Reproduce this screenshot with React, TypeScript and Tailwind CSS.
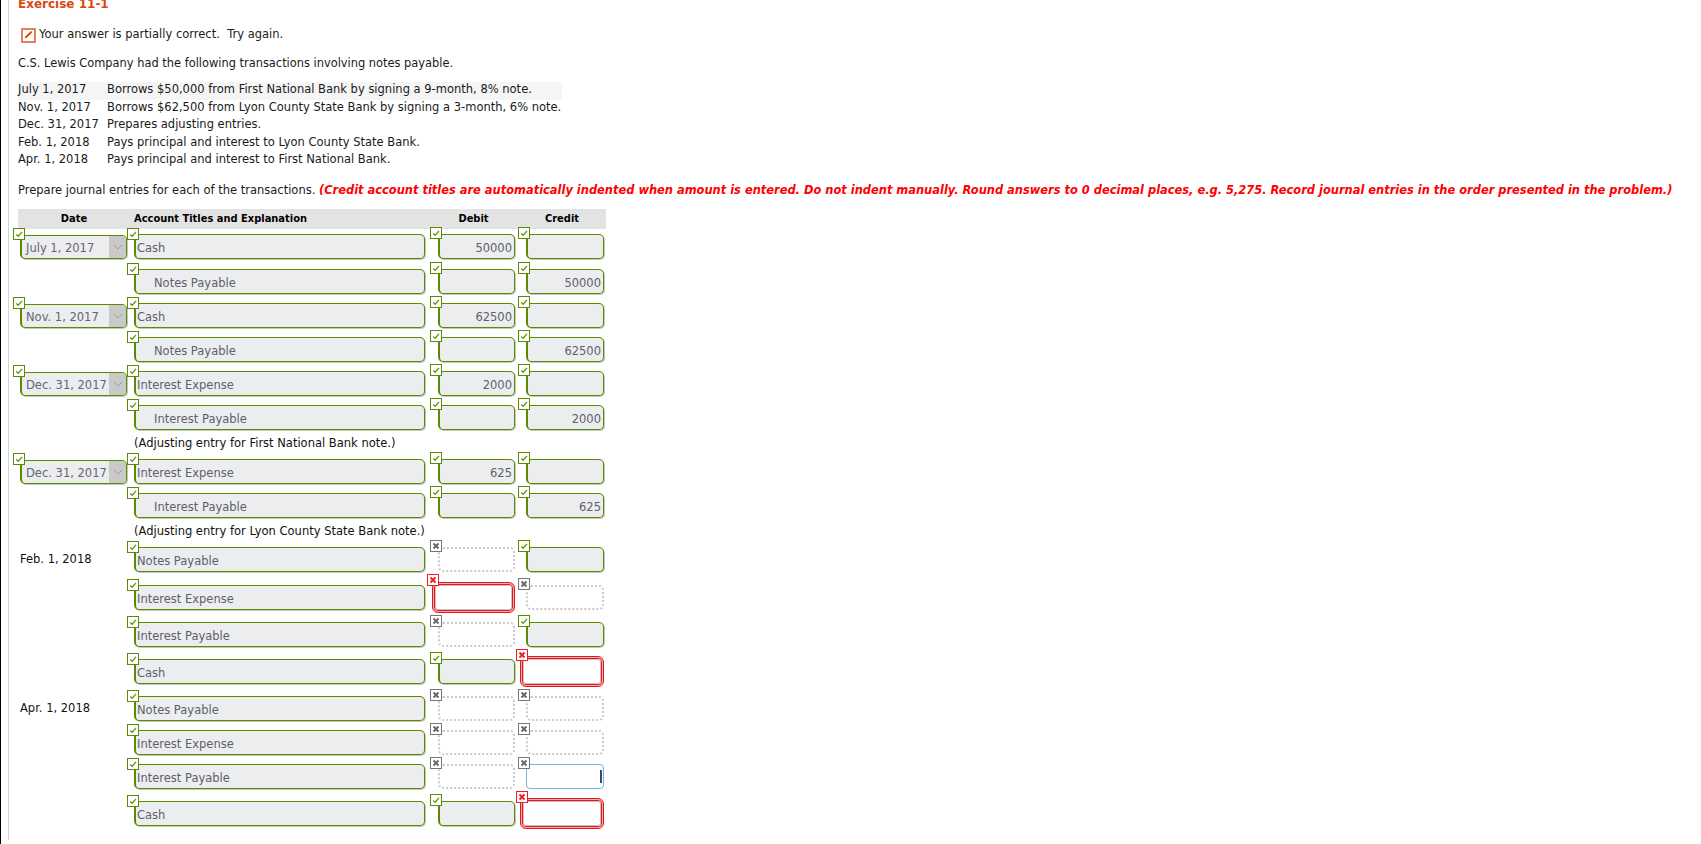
import React from "react";

type Mark = "ok" | "no" | "bad";
type Kind = "ok" | "empty" | "focus" | "bad";

const Badge = ({ mark, className }: { mark: Mark; className: string }) => {
  const color = mark === "ok" ? "border-[#5b8c00]" : mark === "no" ? "border-[#777777]" : "border-[#ee1c25]";
  return (
    <span className={`absolute z-10 flex h-3 w-3 items-center justify-center border bg-white ${color} ${className}`}>
      <svg viewBox="0 0 10 10" className="h-[10px] w-[10px]" fill="none">
        {mark === "ok" && <path d="M2.2 5.4 L4.2 7.2 L8 2.8" stroke="#5b9a12" strokeWidth="1.3" />}
        {mark === "no" && <path d="M2.5 2.5 L7.5 7.5 M7.5 2.5 L2.5 7.5" stroke="#666666" strokeWidth="1.9" />}
        {mark === "bad" && <path d="M2.5 2.5 L7.5 7.5 M7.5 2.5 L2.5 7.5" stroke="#ee1c25" strokeWidth="1.9" />}
      </svg>
    </span>
  );
};

const boxOk = "rounded-[5px] border border-[#5b8c00] border-l-2 bg-[#ecedef] shadow-[1px_1px_0_#c4c6c0]";

const Amount = ({ kind, value, wide }: { kind: Kind; value?: string; wide?: boolean }) => {
  const w = wide ? "w-[78px]" : "w-[77px]";
  if (kind === "bad") {
    return (
      <div className={`relative h-[25px] ${w}`}>
        <Badge mark="bad" className={wide ? "-left-[10px] -top-[7px]" : "-left-[11px] -top-2"} />
        <div className={`-mt-[3px] h-[31px] rounded-[6px] border border-[#e8141c] bg-[#f7b0b0] p-[1px] ${wide ? "-ml-[6px] w-[84px]" : "-ml-[6px] w-[83px]"}`}>
          <div className="h-full rounded-[4px] border border-[#e8141c] bg-white">
            <div className="h-full rounded-[3px] border border-[#c4c4c4] bg-white" />
          </div>
        </div>
      </div>
    );
  }
  if (kind === "empty" || kind === "focus") {
    return (
      <div className={`relative h-[25px] ${w}`}>
        <Badge mark="no" className="-left-2 -top-[7px]" />
        {kind === "empty" ? (
          <div className="h-full rounded-[5px] border-2 border-dotted border-[#cbcbcb] bg-white" />
        ) : (
          <div className="flex h-full items-center justify-end rounded-[4px] border border-[#79b4e6] bg-white pr-[1px]">
            <span className="h-[13px] w-[2px] bg-[#3d4b5e]" />
          </div>
        )}
      </div>
    );
  }
  return (
    <div className={`relative h-[25px] ${w}`}>
      <Badge mark="ok" className="-left-2 -top-[7px]" />
      <div className={`flex h-full items-center justify-end pr-[2px] pt-[5px] text-[#5f5f6b] ${boxOk}`}>{value}</div>
    </div>
  );
};

const DateField = ({ value }: { value: string }) => (
  <div className="relative ml-[2px] mt-[1px] h-[24px] w-[107px]">
    <Badge mark="ok" className="-left-[7px] -top-[7px]" />
    <div className={`flex h-full items-center justify-between overflow-hidden pl-[4px] text-[#666670] ${boxOk}`}>
      <span className="whitespace-nowrap pt-[4px]">{value}</span>
      <span className="flex h-full w-[17px] shrink-0 items-center justify-center bg-[#c9c9c9]">
        <svg viewBox="0 0 10 6" className="h-[6px] w-[10px]" fill="none">
          <path d="M1 1 L5 5 L9 1" stroke="#a0a0a0" strokeWidth="1" />
        </svg>
      </span>
    </div>
  </div>
);

type Row = {
  mt: string;
  date?: string;
  plain?: string;
  account: string;
  indent?: boolean;
  debit: Kind;
  debitValue?: string;
  credit: Kind;
  creditValue?: string;
  note?: string;
};

const rows: Row[] = [
  { mt: "mt-[5px]", date: "July 1, 2017", account: "Cash", debit: "ok", debitValue: "50000", credit: "ok" },
  { mt: "mt-[10px]", account: "Notes Payable", indent: true, debit: "ok", credit: "ok", creditValue: "50000" },
  { mt: "mt-[9px]", date: "Nov. 1, 2017", account: "Cash", debit: "ok", debitValue: "62500", credit: "ok" },
  { mt: "mt-[9px]", account: "Notes Payable", indent: true, debit: "ok", credit: "ok", creditValue: "62500" },
  { mt: "mt-[9px]", date: "Dec. 31, 2017", account: "Interest Expense", debit: "ok", debitValue: "2000", credit: "ok" },
  { mt: "mt-[9px]", account: "Interest Payable", indent: true, debit: "ok", credit: "ok", creditValue: "2000", note: "(Adjusting entry for First National Bank note.)" },
  { mt: "mt-0", date: "Dec. 31, 2017", account: "Interest Expense", debit: "ok", debitValue: "625", credit: "ok" },
  { mt: "mt-[9px]", account: "Interest Payable", indent: true, debit: "ok", credit: "ok", creditValue: "625", note: "(Adjusting entry for Lyon County State Bank note.)" },
  { mt: "mt-0", plain: "Feb. 1, 2018", account: "Notes Payable", debit: "empty", credit: "ok" },
  { mt: "mt-[13px]", account: "Interest Expense", debit: "bad", credit: "empty" },
  { mt: "mt-[12px]", account: "Interest Payable", debit: "empty", credit: "ok" },
  { mt: "mt-[12px]", account: "Cash", debit: "ok", credit: "bad" },
  { mt: "mt-[12px]", plain: "Apr. 1, 2018", account: "Notes Payable", debit: "empty", credit: "empty" },
  { mt: "mt-[9px]", account: "Interest Expense", debit: "empty", credit: "empty" },
  { mt: "mt-[9px]", account: "Interest Payable", debit: "empty", credit: "focus" },
  { mt: "mt-[12px]", account: "Cash", debit: "ok", credit: "bad" },
];

const transactions = [
  ["July 1, 2017", "Borrows $50,000 from First National Bank by signing a 9-month, 8% note."],
  ["Nov. 1, 2017", "Borrows $62,500 from Lyon County State Bank by signing a 3-month, 6% note."],
  ["Dec. 31, 2017", "Prepares adjusting entries."],
  ["Feb. 1, 2018", "Pays principal and interest to Lyon County State Bank."],
  ["Apr. 1, 2018", "Pays principal and interest to First National Bank."],
];

export default function App() {
  return (
    <div className="h-[844px] overflow-hidden border-l border-black bg-white pl-[7px] font-['DejaVu_Sans',sans-serif] text-[11.5px] text-[#1a1a1a]">
      <div className="h-full border-l border-[#ccd4dc] pl-[9px]">
        <div className="-mt-1 h-4 text-[12px] font-bold leading-4 text-[#d9480f]">Exercise 11-1</div>

        <div className="mt-[15px] flex h-[16px] items-center">
          <svg viewBox="0 0 15 15" className="ml-[3px] h-[15px] w-[15px]" fill="none">
            <rect x="1" y="1" width="13" height="13" fill="white" stroke="#e2734f" strokeWidth="1.8" />
            <path d="M4.3 9.8 L10.7 3.6" stroke="#d9480f" strokeWidth="2" />
          </svg>
          <span className="ml-[3px] whitespace-pre">Your answer is partially correct.  Try again.</span>
        </div>

        <div className="mt-[12px] h-4 text-[11.42px] leading-4">C.S. Lewis Company had the following transactions involving notes payable.</div>

        <div className="mt-[11px] w-[544px]">
          {transactions.map(([d, t], i) => (
            <div key={d} className={`flex h-[17.5px] items-center whitespace-nowrap pb-[2px] ${i === 0 ? "bg-[#f5f5f5]" : ""}`}>
              <span className="w-[89px] shrink-0">{d}</span>
              <span>{t}</span>
            </div>
          ))}
        </div>

        <div className="mt-[12.5px] h-4 whitespace-nowrap leading-4">
          Prepare journal entries for each of the transactions.{" "}
          <span className="font-bold italic text-[11.45px] text-[#ff0000]">
            (Credit account titles are automatically indented when amount is entered. Do not indent manually. Round answers to 0 decimal places, e.g. 5,275. Record journal entries in the order presented in the problem.)
          </span>
        </div>

        <div className="mt-[11px] w-[588px]">
          <div className="flex h-5 items-center bg-[#e3e3e3] pt-[1px] text-[11px] font-bold font-stretch-condensed text-black">
            <span className="w-[112px] text-center">Date</span>
            <span className="ml-[4px] w-[301px]">Account Titles and Explanation</span>
            <span className="w-[77px] text-center">Debit</span>
            <span className="ml-[11px] w-[78px] text-center">Credit</span>
          </div>

          {rows.map((r, i) => (
            <React.Fragment key={i}>
              <div className={`flex h-[25px] ${r.mt}`}>
                <div className="w-[116px] shrink-0">
                  {r.date && <DateField value={r.date} />}
                  {r.plain && <div className="ml-[2px] pt-[4px] leading-4 text-[#111111]">{r.plain}</div>}
                </div>
                <div className="relative h-[25px] w-[291px] shrink-0">
                  <Badge mark="ok" className="-left-[7px] -top-[6px]" />
                  <div className={`flex h-full items-center pt-[5px] text-[#5f5f6b] ${boxOk} ${r.indent ? "pl-[18px]" : "pl-[1px]"}`}>{r.account}</div>
                </div>
                <div className="ml-[13px]">
                  <Amount kind={r.debit} value={r.debitValue} />
                </div>
                <div className="ml-[11px]">
                  <Amount kind={r.credit} value={r.creditValue} wide />
                </div>
              </div>
              {r.note && <div className="ml-[116px] h-[29px] whitespace-nowrap pt-[5px] leading-4 text-[#111111]">{r.note}</div>}
            </React.Fragment>
          ))}
        </div>
      </div>
    </div>
  );
}
